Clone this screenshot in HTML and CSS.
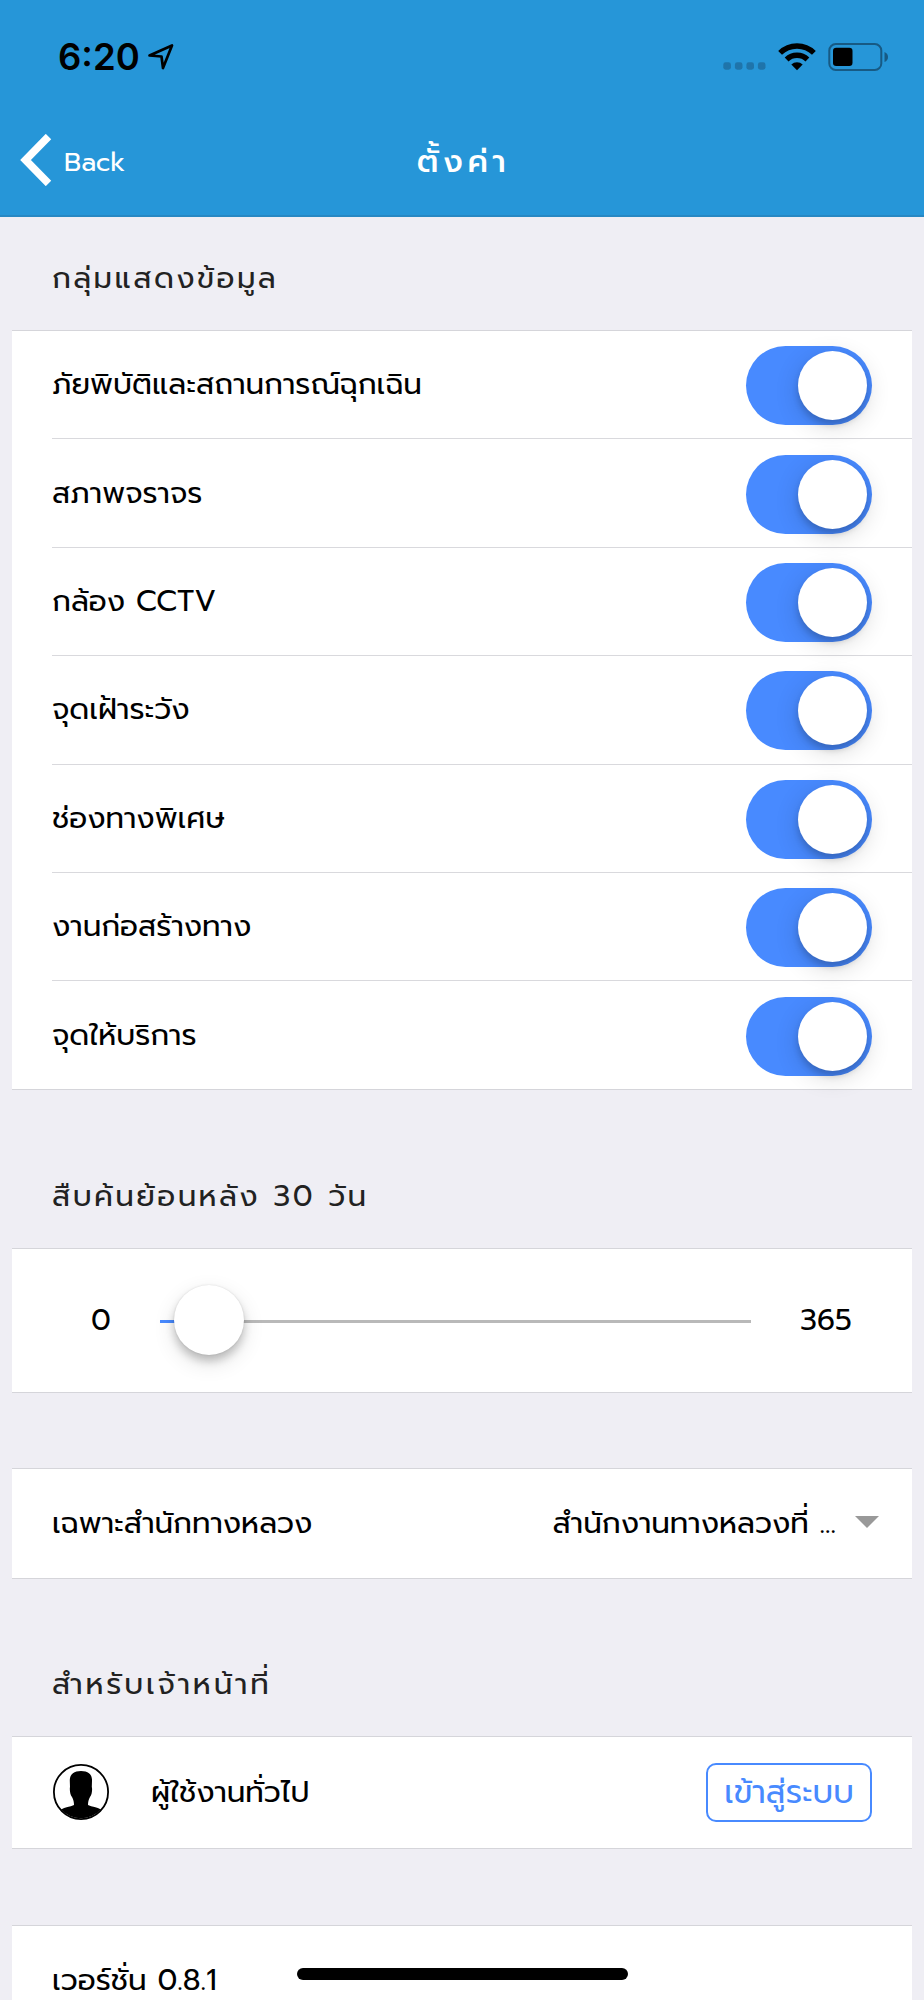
FILE: index.html
```html
<!DOCTYPE html>
<html lang="th">
   <head>
      <meta charset="utf-8">
      <meta name="viewport" content="width=device-width, initial-scale=1">
      <title>ตั้งค่า</title>
      <link rel="stylesheet" href="styles.css">
   </head>
   <body>
      <header class="header">
         <div class="status">
            <span class="time">6:20</span>
            <svg class="location" width="26" height="26" viewBox="0 0 26 26"><path d="M1.5 11.5 L24 1.5 L15 24 L13.5 12.5 Z" fill="none" stroke="#000" stroke-width="2.7" stroke-linejoin="round"/></svg>
            <svg class="signal" width="44" height="8" viewBox="0 0 44 8" fill="#1f74aa"><rect x="0.3" y="0.3" width="7.6" height="7.4" rx="2.4"/><rect x="11.9" y="0.3" width="7.6" height="7.4" rx="2.4"/><rect x="23.4" y="0.3" width="7.6" height="7.4" rx="2.4"/><rect x="34.9" y="0.3" width="7.6" height="7.4" rx="2.4"/></svg>
            <svg class="wifi" width="38" height="28" viewBox="0 0 38 28"><g fill="none" stroke="#000" stroke-width="5.4"><path d="M2.1 9.900 A24 24 0 0 1 35.900 9.900"/><path d="M8.600 16.500 A14.800 14.800 0 0 1 29.400 16.500"/></g><path d="M13.300 21.500 A8.200 8.200 0 0 1 24.700 21.500 L19 27.300 Z"/></svg>
            <svg class="battery" width="61" height="28" viewBox="0 0 61 28"><rect x="1.3" y="1.1" width="52" height="25.8" rx="6.5" fill="none" stroke="#175a84" stroke-width="2"/><rect x="5" y="4.8" width="19.5" height="18.2" rx="3.2"/><path d="M56.5 9 Q60 10.5 60 14 Q60 17.5 56.5 19 Z" fill="#175a84"/></svg>
         </div>
         <nav class="toolbar">
            <a class="back"><svg width="32" height="52" viewBox="0 0 32 52"><path d="M28.5 2.5 L5.5 26 L28.5 49.5" fill="none" stroke="#fff" stroke-width="7.6"/></svg><span>Back</span></a>
            <h1 class="title">ตั้งค่า</h1>
         </nav>
      </header>
      <main class="content">
         <h2 class="heading">กลุ่มแสดงข้อมูล</h2>
         <ul class="card groups">
            <li class="row"><span>ภัยพิบัติและสถานการณ์ฉุกเฉิน</span><i class="toggle"></i></li>
            <li class="row"><span>สภาพจราจร</span><i class="toggle"></i></li>
            <li class="row"><span>กล้อง CCTV</span><i class="toggle"></i></li>
            <li class="row"><span>จุดเฝ้าระวัง</span><i class="toggle"></i></li>
            <li class="row"><span>ช่องทางพิเศษ</span><i class="toggle"></i></li>
            <li class="row"><span>งานก่อสร้างทาง</span><i class="toggle"></i></li>
            <li class="row"><span>จุดให้บริการ</span><i class="toggle"></i></li>
         </ul>
         <h2 class="heading heading-days">สืบค้นย้อนหลัง 30 วัน</h2>
         <div class="card range">
            <span class="range-min">0</span>
            <div class="track"><i class="knob"></i></div>
            <span class="range-max">365</span>
         </div>
         <div class="card office">
            <span>เฉพาะสำนักทางหลวง</span>
            <span class="value">สำนักงานทางหลวงที่ ...</span>
            <i class="arrow"></i>
         </div>
         <h2 class="heading heading-staff">สำหรับเจ้าหน้าที่</h2>
         <div class="card user">
            <svg class="avatar" width="56" height="56" viewBox="0 0 56 56"><circle cx="28" cy="28" r="27.1" fill="#fff" stroke="#000" stroke-width="1.8"/><path d="M28 7 C21 7 16.5 10.5 16.8 17 L17 23 C16.5 25 17 31 19 33 C20.5 36 21 38 21 41 C17 43 12 43 8 45.5 A27 27 0 0 0 48 45.5 C44 43 39 43 35 41 C35 38 35.5 36 37 33 C39 31 39.5 25 38.8 23 L39 17 C39.5 10.5 35 7 28 7 Z"/></svg>
            <span>ผู้ใช้งานทั่วไป</span>
            <button class="login">เข้าสู่ระบบ</button>
         </div>
         <div class="card version">เวอร์ชั่น 0.8.1</div>
      </main>
      <div class="home-indicator"></div>
   </body>
</html>
```
FILE: styles.css
```css
* {
   box-sizing: border-box;
}
body {
   margin: 0;
   height: 2000px;
   overflow: hidden;
   background-color: #efeef4;
   color: #000;
   font-family: "Prompt", "Noto Sans Thai", "Noto Sans", sans-serif;
   font-size: 29.5px;
   line-height: 40px;
   white-space: nowrap;
}
.header {
   height: 217px;
   background-color: #2696d8;
   border-bottom: 2px solid #2788c3;
   color: #fff;
}
.status {
   display: flex;
   align-items: center;
   height: 113px;
   padding: 0 35px 0 58px;
}
.time {
   width: 90px;
   color: #000;
   font: 600 36.5px/40px Inter, sans-serif;
}
.signal {
   margin: 19px 11px 0 auto;
}
.battery {
   margin-left: 12px;
}
.toolbar {
   display: grid;
   grid-template-columns: 1fr auto 1fr;
   align-items: center;
   height: 94px;
}
.back {
   display: flex;
   align-items: center;
   gap: 12px;
   padding-left: 20px;
   font-size: 26.5px;
}
.back span {
   padding-top: 4px;
}
.title {
   margin: 0;
   padding: 3px 0 0 3px;
   font-size: 31.5px;
   font-weight: 500;
   letter-spacing: 4.6px;
}
.content {
   padding: 0 12px;
}
.heading {
   display: flex;
   align-items: center;
   height: 113px;
   margin: 0;
   padding: 9px 40px 0;
   color: #222;
   font-size: 29.5px;
   font-weight: 400;
   letter-spacing: 2.4px;
}
.card {
   display: flex;
   align-items: center;
   margin: 0;
   padding: 0 40px;
   background-color: #fff;
   border: solid #d5d5da;
   border-width: 1px 0;
}
.groups {
   display: block;
   padding-right: 0;
   list-style: none;
}
.row {
   display: flex;
   align-items: center;
   justify-content: space-between;
   height: 108.4px;
   padding: 2px 39.6px 0 0;
   border-bottom: 1px solid #d9d9dd;
}
.row span {
   padding-bottom: 3px;
}
.row:last-child {
   height: 107.4px;
   border-bottom: none;
}
.toggle {
   width: 126px;
   height: 79px;
   padding: 5px;
   border-radius: 40px;
   background-color: #488aff;
}
.toggle::before {
   content: "";
   display: block;
   width: 69px;
   height: 69px;
   margin-left: auto;
   border-radius: 50%;
   background-color: #fff;
   box-shadow: 0 6px 24px rgba(0, 0, 0, 0.16), 0 5px 6px rgba(0, 0, 0, 0.16);
}
.heading-days {
   height: 158.2px;
   padding-top: 54px;
}
.range {
   height: 145px;
}
.range-min {
   width: 108px;
   padding-left: 39px;
}
.range-max {
   margin-left: 49px;
}
.track {
   display: flex;
   align-items: center;
   width: 591px;
   height: 3px;
   margin-top: 3px;
   background: linear-gradient(to right, #488aff 48px, #b9b9b9 48px);
}
.knob {
   width: 70px;
   height: 70px;
   margin: -4px 0 0 13.5px;
   border-radius: 50%;
   background-color: #fff;
   box-shadow: 0 0 2px rgba(0, 0, 0, 0.12), 0 6px 8px rgba(0, 0, 0, 0.2), 0 8px 22px rgba(0, 0, 0, 0.12);
}
.office {
   height: 111px;
   margin-top: 75px;
   padding-right: 33px;
}
.value {
   margin-left: auto;
}
.arrow {
   margin-left: 19px;
   margin-bottom: 2px;
   border: 12px solid transparent;
   border-top-color: #999;
   border-bottom: none;
}
.heading-staff {
   height: 157px;
   padding-top: 54px;
   letter-spacing: 2.8px;
}
.user {
   height: 113px;
}
.avatar {
   margin-right: 42px;
   margin-left: 1px;
}
.login {
   width: 166px;
   height: 59px;
   margin-left: auto;
   padding: 2px 0 0;
   border: 2px solid #488aff;
   border-radius: 10px;
   background-color: #fff;
   color: #488aff;
   font: inherit;
   font-size: 32px;
}
.version {
   height: 111px;
   margin-top: 76px;
   padding-bottom: 1px;
}
.home-indicator {
   position: fixed;
   left: 297px;
   bottom: 20px;
   width: 331px;
   height: 12px;
   border-radius: 6px;
   background-color: #000;
}
```
